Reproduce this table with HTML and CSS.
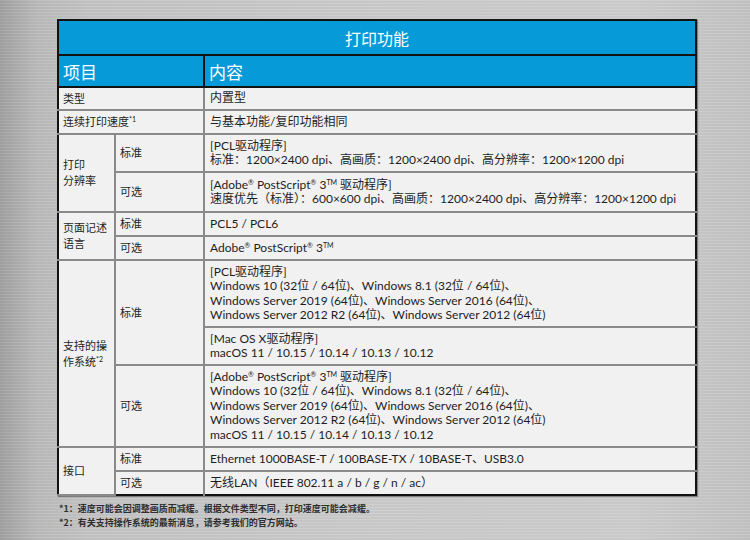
FILE: index.html
```html
<!DOCTYPE html>
<html lang="zh-CN">
<head>
<meta charset="utf-8">
<link rel="stylesheet" href="styles.css">
</head>
<body>
<div class="page">
  <table class="spec">
    <colgroup>
      <col class="c1"><col class="c2"><col class="c3">
    </colgroup>
    <thead>
      <tr class="title"><th colspan="3">打印功能</th></tr>
      <tr class="head"><th colspan="2" class="h-item">项目</th><th class="h-content">内容</th></tr>
    </thead>
    <tbody>
      <tr class="r23"><td colspan="2" class="lbl">类型</td><td>内置型</td></tr>
      <tr class="r24"><td colspan="2" class="lbl">连续打印速度<sup>*1</sup></td><td>与基本功能/复印功能相同</td></tr>
      <tr class="r38"><td rowspan="2" class="lbl">打印<br>分辨率</td><td class="lbl">标准</td><td>[PCL驱动程序]<br>标准：1200×2400 dpi、高画质：1200×2400 dpi、高分辨率：1200×1200 dpi</td></tr>
      <tr class="r40"><td class="lbl">可选</td><td>[Adobe<sup>®</sup> PostScript<sup>®</sup> 3<sup>TM</sup> 驱动程序]<br>速度优先（标准）：600×600 dpi、高画质：1200×2400 dpi、高分辨率：1200×1200 dpi</td></tr>
      <tr class="r24"><td rowspan="2" class="lbl">页面记述<br>语言</td><td class="lbl">标准</td><td>PCL5 / PCL6</td></tr>
      <tr class="r24"><td class="lbl">可选</td><td>Adobe<sup>®</sup> PostScript<sup>®</sup> 3<sup>TM</sup></td></tr>
      <tr class="r67"><td rowspan="3" class="lbl">支持的操<br>作系统<sup>*2</sup></td><td rowspan="2" class="lbl">标准</td><td>[PCL驱动程序]<br>Windows 10 (32位 / 64位)、Windows 8.1 (32位 / 64位)、<br>Windows Server 2019 (64位)、Windows Server 2016 (64位)、<br>Windows Server 2012 R2 (64位)、Windows Server 2012 (64位)</td></tr>
      <tr class="r38"><td>[Mac OS X驱动程序]<br>macOS 11 / 10.15 / 10.14 / 10.13 / 10.12</td></tr>
      <tr class="r82"><td class="lbl">可选</td><td>[Adobe<sup>®</sup> PostScript<sup>®</sup> 3<sup>TM</sup> 驱动程序]<br>Windows 10 (32位 / 64位)、Windows 8.1 (32位 / 64位)、<br>Windows Server 2019 (64位)、Windows Server 2016 (64位)、<br>Windows Server 2012 R2 (64位)、Windows Server 2012 (64位)<br>macOS 11 / 10.15 / 10.14 / 10.13 / 10.12</td></tr>
      <tr class="r24"><td rowspan="2" class="lbl">接口</td><td class="lbl">标准</td><td>Ethernet 1000BASE-T / 100BASE-TX / 10BASE-T、USB3.0</td></tr>
      <tr class="r24"><td class="lbl">可选</td><td>无线LAN（IEEE 802.11 a / b / g / n / ac）</td></tr>
    </tbody>
  </table>
  <div class="notes">
    <p>*1：速度可能会因调整画质而减缓。根据文件类型不同，打印速度可能会减缓。</p>
    <p>*2：有关支持操作系统的最新消息，请参考我们的官方网站。</p>
  </div>
</div>
</body>
</html>
```

FILE: styles.css
```css
html, body {
  margin: 0;
  padding: 0;
}
body {
  width: 750px;
  height: 540px;
  overflow: hidden;
  background:
    repeating-linear-gradient(180deg, rgba(255,255,255,0.05) 0 1px, rgba(0,0,0,0.03) 1px 3px),
    linear-gradient(90deg, #a3a3a3 0%, #bdbdbd 5%, #c6c6c6 12%, #cdcdcd 50%, #cfcfcf 85%, #c5c5c5 100%);
  font-family: Lato, "Noto Sans CJK SC", sans-serif;
}
.page {
  padding: 19px 0 0 57px;
}
.spec {
  width: 638px;
  table-layout: fixed;
  border-collapse: collapse;
  border: 2px solid #121212;
  box-shadow: 1px 1px 1px rgba(0,0,0,0.35);
}
.c1 { width: 57px; }
.c2 { width: 89px; }
.c3 { width: 492px; }
.title th {
  height: 33px;
  padding: 0;
  background: #069ad8;
  color: #fff;
  font-family: "Noto Sans CJK SC", sans-serif;
  font-weight: 400;
  font-size: 16px;
  text-align: center;
  border-bottom: 2px solid #121212;
}
.head th {
  height: 30px;
  padding: 0 4px;
  background: #069ad8;
  color: #fff;
  font-family: "Noto Sans CJK SC", sans-serif;
  font-weight: 400;
  font-size: 17px;
  text-align: left;
  border-bottom: 2px solid #121212;
}
.head .h-item { border-right: 2px solid #121212; }
td {
  background: #f1f1f1;
  border: 2px solid #8a8a8a;
  padding: 0 5px;
  font-size: 12px;
  line-height: 14.5px;
  color: #1e1e1e;
  vertical-align: middle;
}
td.lbl {
  font-size: 11px;
  line-height: 16px;
  padding-left: 4px;
}
tbody tr:last-child td { border-bottom: none; }
tbody td:first-child { border-left: none; }
tbody td:last-child { border-right: none; }
sup {
  font-size: 7px;
  line-height: 0;
  vertical-align: 4px;
}
.r23 td { height: 21px; }
.r24 td { height: 22px; }
.r38 td { height: 36px; }
.r40 td { height: 38px; }
.r67 td { height: 65px; }
.r82 td { height: 80px; }
.notes {
  margin-top: 6px;
  padding-left: 2px;
  font-family: "Noto Sans CJK SC", sans-serif;
  font-size: 9px;
  font-weight: 700;
  line-height: 14px;
  color: #2e2e2e;
}
.notes p { margin: 0; }
```
